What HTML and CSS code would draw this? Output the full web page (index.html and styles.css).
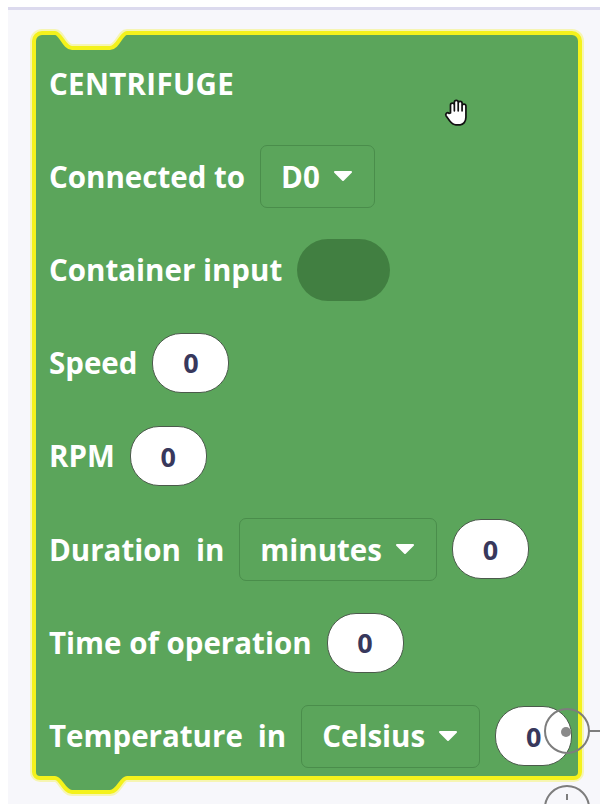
FILE: index.html
```html
<!DOCTYPE html>
<html lang="en">
<head>
<meta charset="utf-8">
<title>Centrifuge block</title>
<link rel="stylesheet" href="styles.css">
</head>
<body>
<div class="workspace">
  <div class="block">
    <svg class="block-shape" width="551" height="765" viewBox="0 0 551 765" aria-hidden="true">
      <path class="glow" d="M2,10 A8,8 0 0 1 10,2 H23 C29,2 32,17 40,17 H78 C86,17 89,2 95,2 H540 A8,8 0 0 1 548,10 V741 A6,6 0 0 1 542,747 H95 C89,747 86,761 78,761 H40 C32,761 29,747 23,747 H8 A6,6 0 0 1 2,741 Z"/>
      <path class="body" d="M2,10 A8,8 0 0 1 10,2 H23 C29,2 32,17 40,17 H78 C86,17 89,2 95,2 H540 A8,8 0 0 1 548,10 V741 A6,6 0 0 1 542,747 H95 C89,747 86,761 78,761 H40 C32,761 29,747 23,747 H8 A6,6 0 0 1 2,741 Z"/>
    </svg>

    <div class="row title">CENTRIFUGE</div>

    <div class="row">
      <span class="label">Connected to</span>
      <span class="dropdown">D0<svg class="caret" viewBox="0 0 20 12"><path d="M2,2 H18 L10,10 Z"/></svg></span>
    </div>

    <div class="row">
      <span class="label">Container input</span>
      <span class="socket"></span>
    </div>

    <div class="row">
      <span class="label">Speed</span>
      <span class="number">0</span>
    </div>

    <div class="row">
      <span class="label">RPM</span>
      <span class="number">0</span>
    </div>

    <div class="row">
      <span class="label">Duration</span>
      <span class="label">in</span>
      <span class="dropdown">minutes<svg class="caret" viewBox="0 0 20 12"><path d="M2,2 H18 L10,10 Z"/></svg></span>
      <span class="number">0</span>
    </div>

    <div class="row">
      <span class="label">Time of operation</span>
      <span class="number">0</span>
    </div>

    <div class="row">
      <span class="label">Temperature</span>
      <span class="label">in</span>
      <span class="dropdown">Celsius<svg class="caret" viewBox="0 0 20 12"><path d="M2,2 H18 L10,10 Z"/></svg></span>
      <span class="number">0</span>
    </div>
  </div>

  <!-- grab cursor hovering the block -->
  <svg class="cursor" width="28" height="30" viewBox="0 0 26 28" aria-hidden="true">
    <path d="M6,14 V6.5 a1.8,1.8 0 0 1 3.6,0 V12 V4 a1.8,1.8 0 0 1 3.6,0 V12 V5 a1.8,1.8 0 0 1 3.6,0 V12 V7.5 a1.8,1.8 0 0 1 3.6,0 V18 C20.4,22 18,25 15,25 H11 C8,25 6.5,23 5,21 L1.8,16.5 a1.8,1.8 0 0 1 2.8,-2.2 Z"/>
  </svg>

  <!-- connection markers at the right edge -->
  <svg class="connector" width="60" height="120" viewBox="0 0 60 120" aria-hidden="true">
    <circle class="ring" cx="27" cy="21" r="22"/>
    <circle class="dot" cx="26" cy="22" r="5"/>
    <line class="ring" x1="49" y1="21" x2="60" y2="21"/>
    <circle class="ring" cx="27" cy="98" r="22"/>
    <line class="ring" x1="27" y1="84" x2="27" y2="90"/>
  </svg>
</div>
</body>
</html>
```

FILE: styles.css
```css
html, body {
  margin: 0;
  padding: 0;
  background: #ffffff;
}

body {
  width: 600px;
  height: 804px;
  overflow: hidden;
  font-family: "Open Sans", "DejaVu Sans", sans-serif;
}

.workspace {
  position: relative;
  margin: 7px 0 0 8px;
  height: 797px;
  border-top: 3px solid #dcdaee;
  background: #f7f7fb;
  padding-top: 21px;
  padding-left: 24px;
  box-sizing: border-box;
}

.block {
  position: relative;
  width: 551px;
  height: 749px;
  box-sizing: border-box;
  padding: 20px 0 0 17px;
  display: flex;
  flex-direction: column;
  gap: 29.3px;
}

.block-shape {
  position: absolute;
  left: 0;
  top: 0;
  overflow: visible;
  z-index: 0;
}

.block-shape .body {
  fill: #5ba55b;
  stroke: #f4f21c;
  stroke-width: 4;
}

.block-shape .glow {
  fill: none;
  stroke: rgba(246, 244, 120, 0.55);
  stroke-width: 8;
}

.row {
  position: relative;
  z-index: 1;
  height: 64px;
  display: flex;
  align-items: center;
  gap: 15px;
  color: #ffffff;
  font-weight: 700;
  font-size: 29.5px;
  white-space: nowrap;
}

.title {
  letter-spacing: 0.3px;
}

.label {
  line-height: 1;
}

.dropdown {
  height: 63px;
  box-sizing: border-box;
  display: flex;
  align-items: center;
  gap: 13px;
  padding: 0 21px 0 20px;
  border: 1.5px solid #4a8d4b;
  border-radius: 7px;
  line-height: 1;
}

.caret {
  width: 20px;
  height: 12px;
}

.caret path {
  fill: #ffffff;
  stroke: #ffffff;
  stroke-width: 2;
  stroke-linejoin: round;
}

.socket {
  width: 93px;
  height: 62px;
  border-radius: 31px;
  background: #417f41;
}

.number {
  width: 77px;
  height: 60px;
  box-sizing: border-box;
  border: 1.5px solid #4b5a4b;
  border-radius: 29px;
  background: #ffffff;
  color: #38385c;
  display: flex;
  align-items: center;
  justify-content: center;
  line-height: 1;
  font-size: 27px;
}

.cursor {
  position: absolute;
  left: 436px;
  top: 88px;
  z-index: 2;
}

.cursor path {
  fill: #ffffff;
  stroke: #111111;
  stroke-width: 1.6;
  stroke-linejoin: round;
}

.connector {
  position: absolute;
  left: 532px;
  top: 700px;
  z-index: 2;
  overflow: visible;
}

.connector .ring {
  fill: none;
  stroke: #7d7d7d;
  stroke-width: 2;
}

.connector .dot {
  fill: #8a8a8a;
}
```
